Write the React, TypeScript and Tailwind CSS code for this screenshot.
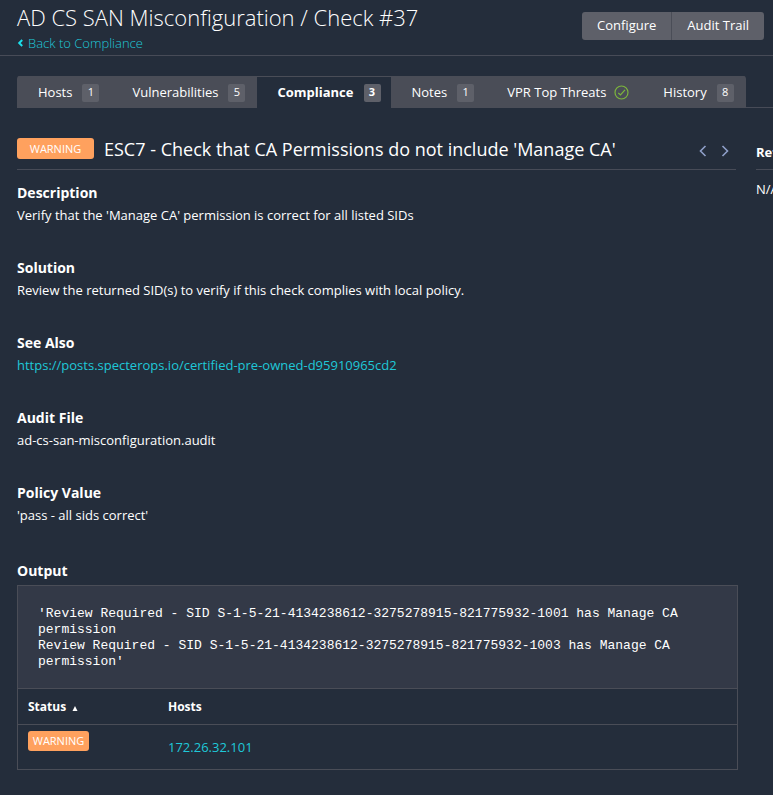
import type { ReactNode } from "react";

type Tab = { label: string; count?: number; active?: boolean };

const tabs: Tab[] = [
  { label: "Hosts", count: 1 },
  { label: "Vulnerabilities", count: 5 },
  { label: "Compliance", count: 3, active: true },
  { label: "Notes", count: 1 },
  { label: "VPR Top Threats" },
  { label: "History", count: 8 },
];

function CheckCircle() {
  return (
    <svg viewBox="0 0 16 16" className="size-4" fill="none" stroke="#7cb53c" aria-hidden="true">
      <circle cx="7.5" cy="7.5" r="6.5" strokeWidth="1.2" />
      <path d="M4.3 8 6.5 10 11 4.8" strokeWidth="1.2" />
    </svg>
  );
}

function Chevron({ d }: { d: string }) {
  return (
    <svg viewBox="0 0 8 12" className="h-3 w-2" fill="none" stroke="#8f9fc9" strokeWidth="1.6" aria-hidden="true">
      <path d={d} />
    </svg>
  );
}

function TabItem({ label, count, active }: Tab) {
  return (
    <button
      type="button"
      className={
        active
          ? "flex h-8 items-center gap-2.5 border-t border-[#4a4d57] bg-[#242d3b] pr-2.5 pl-5 font-bold text-white"
          : count === undefined
            ? "flex h-8 items-center gap-2 border-t border-[#4a4d57] bg-[#4a4d57] pr-3 pl-[21px]"
            : "flex h-8 items-center gap-2.5 border-t border-[#4a4d57] bg-[#4a4d57] pr-3 pl-[21px]"
      }
    >
      <span>{label}</span>
      {count === undefined ? (
        <CheckCircle />
      ) : (
        <span className="flex h-[18px] w-[17px] items-center justify-center rounded-xs bg-[#5e6069] text-[11px]">
          {count}
        </span>
      )}
    </button>
  );
}

function Section({ title, children }: { title: string; children: ReactNode }) {
  return (
    <section className="mb-[30px]">
      <h3 className="text-sm leading-[22px] font-bold text-white">{title}</h3>
      <div className="leading-[23px]">{children}</div>
    </section>
  );
}

export default function App() {
  return (
    <div className="min-h-screen overflow-hidden bg-[#242d3b] font-['Open_Sans',sans-serif] text-[13px] text-white">
      <header className="flex h-14 items-start justify-between border-b border-[#474b57] pr-[9px] pl-[17px]">
        <div>
          <h1 className="text-[22px] leading-[34px] font-light">AD CS SAN Misconfiguration / Check #37</h1>
          <a href="#compliance" className="flex items-center gap-1 leading-[18px] font-light text-[#1fc8d8]">
            <svg viewBox="0 0 7 8" className="h-2 w-[7px]" fill="none" stroke="#1cdfec" strokeWidth="2" aria-hidden="true">
              <path d="M5.2 1 2.2 4 5.2 7" />
            </svg>
            Back to Compliance
          </a>
        </div>
        <div className="mt-3 flex overflow-hidden rounded-[3px]">
          <button type="button" className="h-7 border-r border-[#4a4d57] bg-[#5e6069] px-[15px]">Configure</button>
          <button type="button" className="h-7 bg-[#5e6069] px-[15px]">Audit Trail</button>
        </div>
      </header>

      <nav className="mt-5 flex pl-[17px]">
        <div className="flex shrink-0 overflow-hidden rounded-t-[3px]">
          {tabs.map((tab) => (
            <TabItem key={tab.label} {...tab} />
          ))}
        </div>
        <div className="flex-1 border-b border-[#474b57]" />
      </nav>

      <div className="flex gap-[18px] pl-[17px]">
        <main className="min-w-0 flex-1">
          <div className="mr-0.5 mb-3 flex h-[62px] items-center border-b border-[#474b57] pt-5">
            <span className="mr-2.5 flex h-[21px] w-[77px] items-center justify-center rounded-[3px] bg-[#ffa15e] pt-px text-[11px]">
              WARNING
            </span>
            <h2 className="flex-1 text-lg leading-6">ESC7 - Check that CA Permissions do not include 'Manage CA'</h2>
            <div className="mt-1 mr-[7px] flex gap-3.5">
              <button type="button" aria-label="Previous"><Chevron d="M6.5 1 1.5 6 6.5 11" /></button>
              <button type="button" aria-label="Next"><Chevron d="M1.5 1 6.5 6 1.5 11" /></button>
            </div>
          </div>

          <Section title="Description">Verify that the 'Manage CA' permission is correct for all listed SIDs</Section>
          <Section title="Solution">Review the returned SID(s) to verify if this check complies with local policy.</Section>
          <Section title="See Also">
            <a href="https://posts.specterops.io/certified-pre-owned-d95910965cd2" className="text-[#1fc8d8]">
              https://posts.specterops.io/certified-pre-owned-d95910965cd2
            </a>
          </Section>
          <Section title="Audit File">ad-cs-san-misconfiguration.audit</Section>
          <Section title="Policy Value">'pass - all sids correct'</Section>

          <h3 className="pt-[3px] text-sm leading-[22px] font-bold text-white">Output</h3>
          <div className="mt-[3px] border border-[#4a4d57]">
            <pre className="h-[102px] bg-[#333947] px-5 pt-5 font-['Liberation_Mono',monospace] text-[13px] leading-4 whitespace-pre-wrap">
              {"'Review Required - SID S-1-5-21-4134238612-3275278915-821775932-1001 has Manage CA permission\nReview Required - SID S-1-5-21-4134238612-3275278915-821775932-1003 has Manage CA permission'"}
            </pre>
            <table className="w-full text-left">
              <thead>
                <tr className="h-9 border-y border-[#4a4d57] text-xs text-white">
                  <th className="w-[140px] pl-2.5">
                    <span className="flex items-center gap-1.5">
                      Status
                      <svg viewBox="0 0 6 5" className="mt-1 h-[5px] w-1.5" fill="#fff" aria-hidden="true">
                        <path d="M3 0 5.5 5H.5Z" />
                      </svg>
                    </span>
                  </th>
                  <th className="pl-2.5">Hosts</th>
                </tr>
              </thead>
              <tbody>
                <tr className="h-11">
                  <td className="pt-1.5 pl-2.5 align-top">
                    <span className="flex h-5 w-[61px] items-center justify-center rounded-[3px] bg-[#ffa15e] text-[11px]">
                      WARNING
                    </span>
                  </td>
                  <td className="pt-px pl-2.5">
                    <a href="#host" className="text-[#1fc8d8]">172.26.32.101</a>
                  </td>
                </tr>
              </tbody>
            </table>
          </div>
        </main>
        <aside className="w-[17px] shrink-0 overflow-hidden whitespace-nowrap">
          <h3 className="h-[62px] border-b border-[#474b57] pt-8 text-[13px] leading-6 font-bold text-white">Ref</h3>
          <p className="pt-[7px] leading-6">N/A</p>
        </aside>
      </div>
    </div>
  );
}
